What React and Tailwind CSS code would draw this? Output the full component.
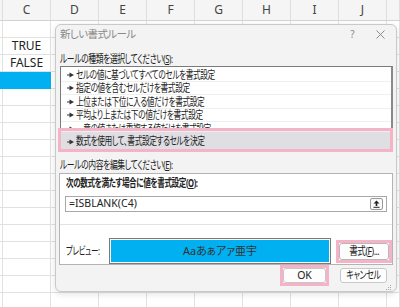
import React from "react";

const COLS = [
  { w: "w-[3px]", l: "" },
  { w: "w-[48px]", l: "C" },
  { w: "w-[48px]", l: "D" },
  { w: "w-[48px]", l: "E" },
  { w: "w-[48px]", l: "F" },
  { w: "w-[48px]", l: "G" },
  { w: "w-[48px]", l: "H" },
  { w: "w-[48px]", l: "I" },
  { w: "w-[48px]", l: "J" },
  { w: "w-[13px]", l: "" },
];

const Arrow = () => (
  <svg width="7" height="6" viewBox="0 0 7 6" className="shrink-0">
    <rect x="0" y="2.5" width="3" height="1" fill="#333" />
    <path d="M2.5 0.5 L7 3 L2.5 5.5Z" fill="#333" />
  </svg>
);

const Item = ({ children, cls = "h-[13.5px]" }) => (
  <div className={`${cls} shrink-0 overflow-hidden border-b border-[#efefef]`}>
    <div className="h-[13.5px] flex items-center gap-[2px] pl-[6px]">
      <Arrow />
      <span className="inline-block origin-left scale-x-[0.70] whitespace-nowrap">{children}</span>
    </div>
  </div>
);

export default function App() {
  const rows = Array.from({ length: 17 });
  return (
    <div className="relative w-[400px] h-[307px] overflow-hidden bg-white font-['Noto_Sans','Noto_Sans_CJK_JP',sans-serif] text-[#222]">
      {/* spreadsheet */}
      <div className="flex flex-col">
        <div className="flex h-[21px] bg-[#f5f5f5] border-b border-[#d2d2d2]">
          {COLS.map((c, i) => (
            <div
              key={i}
              className={`${c.w} shrink-0 border-r border-[#dedede] flex items-center justify-center text-[12px] text-[#444]`}
            >
              {c.l}
            </div>
          ))}
        </div>
        {rows.map((_, r) => (
          <div key={r} className="flex h-[17px]">
            {COLS.map((c, i) => {
              const blue = r === 3 && i <= 1;
              let txt = "";
              if (i === 1 && r === 1) txt = "TRUE";
              if (i === 1 && r === 2) txt = "FALSE";
              return (
                <div
                  key={i}
                  className={`${c.w} shrink-0 border-r border-b ${
                    blue ? "bg-[#00b0f0] border-[#00b0f0]" : "border-[#e1e1e1]"
                  } flex items-center justify-center text-[12px] text-[#222]`}
                >
                  {txt}
                </div>
              );
            })}
          </div>
        ))}
      </div>

      {/* dialog */}
      <div className="absolute left-[55px] top-[24px] w-[342px] h-[268px] bg-[#f3f3f3] border border-[#c9c9c9] rounded-[6px] shadow-[0_2px_6px_rgba(0,0,0,0.12)] flex flex-col px-[3px] text-[11px] [font-feature-settings:'palt'] tracking-[-0.6px]">
        {/* title bar */}
        <div className="h-[20px] flex items-center pl-[1px] pr-[8px] text-[#8a8a8a]">
          <span className="text-[10.5px]">新しい書式ルール</span>
          <span className="ml-auto mr-[22px] text-[10px]">?</span>
          <svg width="9" height="9" viewBox="0 0 9 9">
            <path d="M0.5 0.5 L8.5 8.5 M8.5 0.5 L0.5 8.5" stroke="#8a8a8a" strokeWidth="1" />
          </svg>
        </div>

        <div className="mt-[8px] h-[13px] flex items-center pl-[1px] text-[11.5px]">
          <span className="inline-block origin-left scale-x-[0.68] whitespace-nowrap">
            ルールの種類を選択してください(<span className="underline">S</span>):
          </span>
        </div>

        {/* listbox */}
        <div className="relative mt-[1px] ml-[1px]">
          <div className="flex flex-col bg-white border border-[#7a7a7a] border-r-2 border-r-[#8a8a8a] overflow-hidden pt-[1px]">
            <Item>セルの値に基づいてすべてのセルを書式設定</Item>
            <Item>指定の値を含むセルだけを書式設定</Item>
            <Item>上位または下位に入る値だけを書式設定</Item>
            <Item>平均より上または下の値だけを書式設定</Item>
            <Item cls="h-[10px]">一意の値または重複する値だけを書式設定</Item>
            <div className="h-[17px] shrink-0 bg-[#dfdee3] flex items-center gap-[2px] pl-[6px] pt-[2px]">
              <Arrow />
              <span className="inline-block origin-left scale-x-[0.70] whitespace-nowrap">
                数式を使用して、書式設定するセルを決定
              </span>
            </div>
          </div>
          <div className="absolute left-[-2px] right-[0px] bottom-[-2px] h-[24px] border-[3px] border-[#f5b3c8]" />
        </div>

        <div className="mt-[8px] h-[13px] flex items-center pl-[1px] text-[11.5px]">
          <span className="inline-block origin-left scale-x-[0.68] whitespace-nowrap">
            ルールの内容を編集してください(<span className="underline">E</span>):
          </span>
        </div>

        {/* edit panel */}
        <div className="mt-[2px] h-[96px] bg-white border border-[#b4b4b4] flex flex-col">
          <div className="h-[19px] flex items-center pl-[6px] font-bold text-[11px]">
            <span className="inline-block origin-left scale-x-[0.69] whitespace-nowrap">
              次の数式を満たす場合に値を書式設定(<span className="underline">O</span>):
            </span>
          </div>
          <div className="mt-[3px] mx-[5px] h-[16px] border border-[#a8a8a8] flex items-center pl-[3px] pr-[3px]">
            <span className="text-[10.5px] tracking-[0px]">=ISBLANK(C4)</span>
            <div className="ml-auto w-[13px] h-[12px] border border-[#9a9a9a] rounded-[2px] flex items-center justify-center bg-[#fafafa]">
              <svg width="7" height="8" viewBox="0 0 7 8">
                <path d="M3.5 0.5 L6.5 3.5 L4.3 3.5 L4.3 6 L2.7 6 L2.7 3.5 L0.5 3.5Z" fill="#222" />
                <rect x="0.5" y="6.8" width="6" height="1" fill="#222" />
              </svg>
            </div>
          </div>
          <div className="mt-[12px] border-t border-[#e2e2e2]" />
          <div className="mt-[13px] flex items-center pl-[6px] pr-[3px]">
            <span className="w-[43px] shrink-0 text-[11px] whitespace-nowrap">
              <span className="inline-block origin-left scale-x-[0.68]">プレビュー:</span>
            </span>
            <div className="w-[222px] h-[26px] border border-[#7a7a7a] p-[1px] bg-white">
              <div className="w-full h-full bg-[#00b0f0] flex items-center justify-center text-[11px] text-[#333] tracking-[0px]">
                Aaあぁアァ亜宇
              </div>
            </div>
            <div className="ml-auto relative">
              <div className="w-[50px] h-[17px] border border-[#b8b8b8] rounded-[3px] bg-[#fdfdfd] flex items-center justify-center text-[11px] whitespace-nowrap">
                <span className="inline-block scale-x-[0.78]">
                  書式(<span className="underline">F</span>)...
                </span>
              </div>
              <div className="absolute -inset-[3px] border-[3px] border-[#f5b3c8]" />
            </div>
          </div>
        </div>

        {/* buttons */}
        <div className="mt-[3px] flex justify-end gap-[14px] pr-[6px]">
          <div className="relative">
            <div className="w-[43px] h-[15px] border border-[#c8c8c8] rounded-[3px] bg-[#fdfdfd] flex items-center justify-center text-[10.5px] tracking-[0px]">
              OK
            </div>
            <div className="absolute -inset-[3px] border-[3px] border-[#f5b3c8]" />
          </div>
          <div className="w-[47px] h-[15px] border border-[#c8c8c8] rounded-[3px] bg-[#fdfdfd] flex items-center justify-center text-[11px] whitespace-nowrap">
            <span className="inline-block scale-x-[0.73]">キャンセル</span>
          </div>
        </div>
        <div className="flex justify-end pr-[1px] mt-[2px]">
          <svg width="6" height="6" viewBox="0 0 6 6">
            <rect x="4" y="0" width="1" height="1" fill="#aaa" />
            <rect x="2" y="2" width="1" height="1" fill="#aaa" />
            <rect x="4" y="2" width="1" height="1" fill="#aaa" />
            <rect x="0" y="4" width="1" height="1" fill="#aaa" />
            <rect x="2" y="4" width="1" height="1" fill="#aaa" />
            <rect x="4" y="4" width="1" height="1" fill="#aaa" />
          </svg>
        </div>
      </div>
    </div>
  );
}
